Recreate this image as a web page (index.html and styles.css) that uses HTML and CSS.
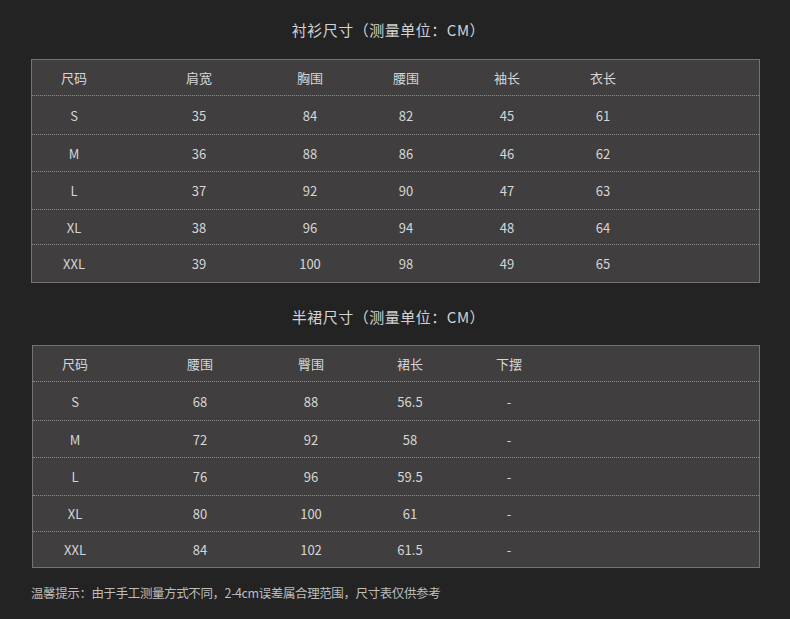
FILE: index.html
```html
<!DOCTYPE html>
<html lang="zh-CN">
<head>
<meta charset="utf-8">
<title>尺寸表</title>
<link rel="stylesheet" href="styles.css">
</head>
<body>
<div class="page">
  <h2 class="title title-first">衬衫尺寸（测量单位：CM）</h2>
  <div class="table shirt">
    <div class="row head"><span>尺码</span><span>肩宽</span><span>胸围</span><span>腰围</span><span>袖长</span><span>衣长</span></div>
    <div class="row r1"><span>S</span><span>35</span><span>84</span><span>82</span><span>45</span><span>61</span></div>
    <div class="row r2"><span>M</span><span>36</span><span>88</span><span>86</span><span>46</span><span>62</span></div>
    <div class="row r3"><span>L</span><span>37</span><span>92</span><span>90</span><span>47</span><span>63</span></div>
    <div class="row r4"><span>XL</span><span>38</span><span>96</span><span>94</span><span>48</span><span>64</span></div>
    <div class="row r5 last"><span>XXL</span><span>39</span><span>100</span><span>98</span><span>49</span><span>65</span></div>
  </div>

  <h2 class="title title-second">半裙尺寸（测量单位：CM）</h2>
  <div class="table skirt">
    <div class="row head"><span>尺码</span><span>腰围</span><span>臀围</span><span>裙长</span><span>下摆</span></div>
    <div class="row r1"><span>S</span><span>68</span><span>88</span><span>56.5</span><span>-</span></div>
    <div class="row r2"><span>M</span><span>72</span><span>92</span><span>58</span><span>-</span></div>
    <div class="row r3"><span>L</span><span>76</span><span>96</span><span>59.5</span><span>-</span></div>
    <div class="row r4b"><span>XL</span><span>80</span><span>100</span><span>61</span><span>-</span></div>
    <div class="row r5b last"><span>XXL</span><span>84</span><span>102</span><span>61.5</span><span>-</span></div>
  </div>

  <p class="note">温馨提示：由于手工测量方式不同，2-4cm误差属合理范围，尺寸表仅供参考</p>
</div>
</body>
</html>
```

FILE: styles.css
```css
html, body {
  margin: 0;
  padding: 0;
  background: #232323;
}

.page {
  width: 790px;
  height: 619px;
  box-sizing: border-box;
  padding: 0 30px 0 31px;
  font-family: "Noto Sans CJK SC", "Noto Sans", sans-serif;
  color: #d6d6d6;
  overflow: hidden;
}

.title {
  margin: 0;
  text-align: center;
  font-size: 15px;
  font-weight: normal;
  line-height: 20px;
  color: #d2d2d2;
  padding-right: 14px;
  letter-spacing: 0.5px;
  box-sizing: border-box;
}

.title-first {
  padding-top: 20px;
  height: 59px;
}

.title-second {
  margin-top: 24px;
  height: 38px;
}

.table {
  background: #403e3f;
  border: 1px solid #737373;
  font-size: 13px;
}

.shirt {
  width: 727px;
}

.skirt {
  width: 726px;
  margin-left: 1px;
}

.row {
  display: grid;
  align-items: center;
  border-bottom: 1px dotted #8c8c8c;
  box-sizing: border-box;
}

.row span {
  text-align: center;
  white-space: nowrap;
}

.row.last {
  border-bottom: none;
}

.shirt .row {
  grid-template-columns: 84px 166px 56px 136px 66px 126px;
}

.skirt .row {
  grid-template-columns: 84px 166px 56px 142px 56px;
}

.head { height: 36px; }
.r1 { height: 39px; }
.r2 { height: 37px; }
.r3 { height: 38px; }
.r4 { height: 35px; }
.r5 { height: 37px; }
.r4b { height: 36px; }
.r5b { height: 35px; }

.note {
  margin: 17px 0 0;
  font-size: 12.5px;
  line-height: 16px;
  color: #bdbdbd;
  letter-spacing: -0.4px;
}
```
